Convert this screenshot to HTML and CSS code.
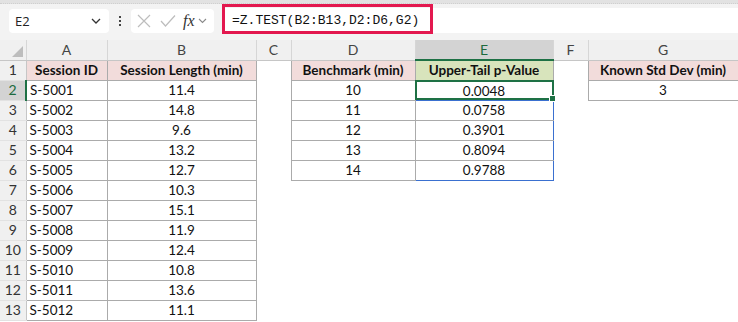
FILE: index.html
```html
<!DOCTYPE html>
<html lang="en">
<head>
    <meta charset="UTF-8">
    <title>Z.TEST</title>
    <link rel="stylesheet" href="styles.css">
</head>
<body>
    <div class="topstrip"></div>
    <div class="toolbar">
        <div class="namebox">
            <span>E2</span>
            <svg width="10" height="6" viewBox="0 0 10 6"><path d="M1 1 L5 5 L9 1" fill="none" stroke="#333" stroke-width="1.3"/></svg>
        </div>
        <div class="dots"><i></i><i></i><i></i></div>
        <div class="fxbox">
            <svg width="14" height="14" viewBox="0 0 14 14"><path d="M1 1 L13 13 M13 1 L1 13" stroke="#bdbdbd" stroke-width="1.2"/></svg>
            <svg width="16" height="14" viewBox="0 0 16 14"><path d="M1 7 L5.5 12 L15 1.5" fill="none" stroke="#bdbdbd" stroke-width="1.2"/></svg>
            <span class="fx">fx</span>
            <svg width="9" height="6" viewBox="0 0 9 6"><path d="M1 1 L4.5 4.5 L8 1" fill="none" stroke="#8a8a8a" stroke-width="1.1"/></svg>
        </div>
        <div class="formula">=Z.TEST(B2:B13,D2:D6,G2)</div>
        <div class="highlight"></div>
    </div>

    <table class="sheet">
        <colgroup>
            <col class="w-rh"><col class="w-a"><col class="w-b"><col class="w-c">
            <col class="w-d"><col class="w-e"><col class="w-f"><col class="w-g">
        </colgroup>
        <tr class="colhead">
            <th class="corner"><div class="tri"></div></th>
            <th>A</th><th>B</th><th>C</th><th>D</th><th class="sel">E</th><th>F</th><th>G</th>
        </tr>
        <tr>
            <th class="rh">1</th>
            <td class="b hdr">Session ID</td><td class="b hdr c">Session Length (min)</td><td></td>
            <td class="b hdr c">Benchmark (min)</td><td class="b hdr green c">Upper-Tail p-Value</td><td></td>
            <td class="b hdr c">Known Std Dev (min)</td>
        </tr>
        <tr>
            <th class="rh sel">2</th>
            <td class="b">S-5001</td><td class="b c">11.4</td><td></td>
            <td class="b c">10</td><td class="b c active"><div class="act">0.0048<span class="handle"></span></div></td><td></td>
            <td class="b c">3</td>
        </tr>
        <tr>
            <th class="rh">3</th>
            <td class="b">S-5002</td><td class="b c">14.8</td><td></td>
            <td class="b c">11</td><td class="b c spill">0.0758</td><td></td><td></td>
        </tr>
        <tr>
            <th class="rh">4</th>
            <td class="b">S-5003</td><td class="b c">9.6</td><td></td>
            <td class="b c">12</td><td class="b c spill">0.3901</td><td></td><td></td>
        </tr>
        <tr>
            <th class="rh">5</th>
            <td class="b">S-5004</td><td class="b c">13.2</td><td></td>
            <td class="b c">13</td><td class="b c spill">0.8094</td><td></td><td></td>
        </tr>
        <tr>
            <th class="rh">6</th>
            <td class="b">S-5005</td><td class="b c">12.7</td><td></td>
            <td class="b c">14</td><td class="b c spill last">0.9788</td><td></td><td></td>
        </tr>
        <tr><th class="rh">7</th><td class="b">S-5006</td><td class="b c">10.3</td><td></td><td></td><td></td><td></td><td></td></tr>
        <tr><th class="rh">8</th><td class="b">S-5007</td><td class="b c">15.1</td><td></td><td></td><td></td><td></td><td></td></tr>
        <tr><th class="rh">9</th><td class="b">S-5008</td><td class="b c">11.9</td><td></td><td></td><td></td><td></td><td></td></tr>
        <tr><th class="rh">10</th><td class="b">S-5009</td><td class="b c">12.4</td><td></td><td></td><td></td><td></td><td></td></tr>
        <tr><th class="rh">11</th><td class="b">S-5010</td><td class="b c">10.8</td><td></td><td></td><td></td><td></td><td></td></tr>
        <tr><th class="rh">12</th><td class="b">S-5011</td><td class="b c">13.6</td><td></td><td></td><td></td><td></td><td></td></tr>
        <tr><th class="rh">13</th><td class="b">S-5012</td><td class="b c">11.1</td><td></td><td></td><td></td><td></td><td></td></tr>
    </table>
</body>
</html>
```

FILE: styles.css
```css
body {
    margin: 0;
    width: 738px;
    height: 322px;
    overflow: hidden;
    background: #fff;
    font-family: Lato, "Open Sans", sans-serif;
}

/* Formula bar */
.topstrip {
    height: 3px;
    background: #e2e2e2;
    border-bottom: 1px dotted #cfcfcf;
}

.toolbar {
    position: relative;
    height: 36px;
    background: #f3f3f3;
    display: flex;
    align-items: flex-start;
    padding-top: 5px;
    box-sizing: border-box;
}

.namebox {
    margin-left: 9px;
    width: 100px;
    height: 24px;
    background: #fff;
    border-radius: 4px;
    display: flex;
    align-items: center;
    justify-content: space-between;
    padding: 0 8px 0 6px;
    box-sizing: border-box;
    font-family: "Open Sans", sans-serif;
    font-size: 13px;
    color: #222;
}

.dots {
    width: 22px;
    height: 24px;
    display: flex;
    flex-direction: column;
    align-items: center;
    justify-content: center;
    gap: 2px;
}

.dots i {
    width: 2px;
    height: 2px;
    background: #444;
}

.fxbox {
    width: 83px;
    height: 24px;
    background: #fff;
    border-radius: 4px;
    display: flex;
    align-items: center;
    gap: 9px;
    padding-left: 6px;
    box-sizing: border-box;
}

.fx {
    font-family: "Liberation Serif", serif;
    font-style: italic;
    font-size: 16px;
    color: #333;
    margin-left: -2px;
    margin-right: -6px;
}

.formula {
    margin-left: 8px;
    flex: 1;
    height: 25px;
    margin-top: -1px;
    background: #fff;
    font-family: "Liberation Mono", monospace;
    font-size: 13px;
    line-height: 25px;
    padding-left: 10px;
    color: #111;
}

.highlight {
    position: absolute;
    left: 222px;
    top: 0;
    width: 211px;
    height: 30px;
    border: 3px solid #e3184f;
    box-sizing: border-box;
}

/* Sheet */
.sheet {
    border-collapse: collapse;
    table-layout: fixed;
    width: 738px;
    font-size: 13.5px;
    color: #111;
}

.w-rh { width: 26px; }
.w-a { width: 81px; }
.w-b { width: 149px; }
.w-c { width: 35px; }
.w-d { width: 124px; }
.w-e { width: 138px; }
.w-f { width: 35px; }
.w-g { width: 150px; }

.sheet tr {
    height: 20px;
}

.sheet th, .sheet td {
    padding: 0;
    height: 19px;
    line-height: 18px;
    box-sizing: border-box;
    white-space: nowrap;
    overflow: hidden;
}

.colhead th {
    background: #f0f0f0;
    font-weight: normal;
    color: #444;
    font-size: 14px;
    border-right: 1px solid #d6d6d6;
    border-bottom: 1px solid #c6c6c6;
}

.colhead th.sel {
    background: #d3d3d3;
    color: #1d6a3e;
    border-bottom: 2px solid #1e7145;
}

.corner {
    position: relative;
}

.tri {
    position: absolute;
    right: 3px;
    bottom: 3px;
    width: 0;
    height: 0;
    border-left: 11px solid transparent;
    border-bottom: 11px solid #bdbdbd;
}

.rh {
    background: #f0f0f0;
    font-weight: normal;
    color: #333;
    font-size: 14px;
    text-align: center;
    border-right: 1px solid #c6c6c6;
    border-bottom: 1px solid #e2e2e2;
}

.rh.sel {
    background: #d3d3d3;
    color: #1d6a3e;
    border-right: 2px solid #1e7145;
}

td.b {
    border: 1px solid #ababab;
    padding-left: 3px;
}

td.c {
    text-align: center;
    padding-left: 0;
}

td.hdr {
    background: #f2dcdb;
    font-weight: bold;
    text-align: center;
    padding-left: 0;
}

td.hdr.green {
    background: #d8e4bc;
    border-top: 1px solid #1e7145;
}

td.active {
    border: 1px solid #3a70d0;
    overflow: visible;
}

.act {
    position: relative;
    margin: -1px;
    height: 20px;
    line-height: 18px;
    border: 2px solid #1e7145;
    box-sizing: border-box;
}

.handle {
    position: absolute;
    right: -4px;
    bottom: -4px;
    width: 5px;
    height: 5px;
    background: #1e7145;
    border: 1px solid #fff;
}

td.spill {
    border-left: 1px solid #3a70d0;
    border-right: 1px solid #3a70d0;
}

td.spill.last {
    border-bottom: 1px solid #3a70d0;
}
```
